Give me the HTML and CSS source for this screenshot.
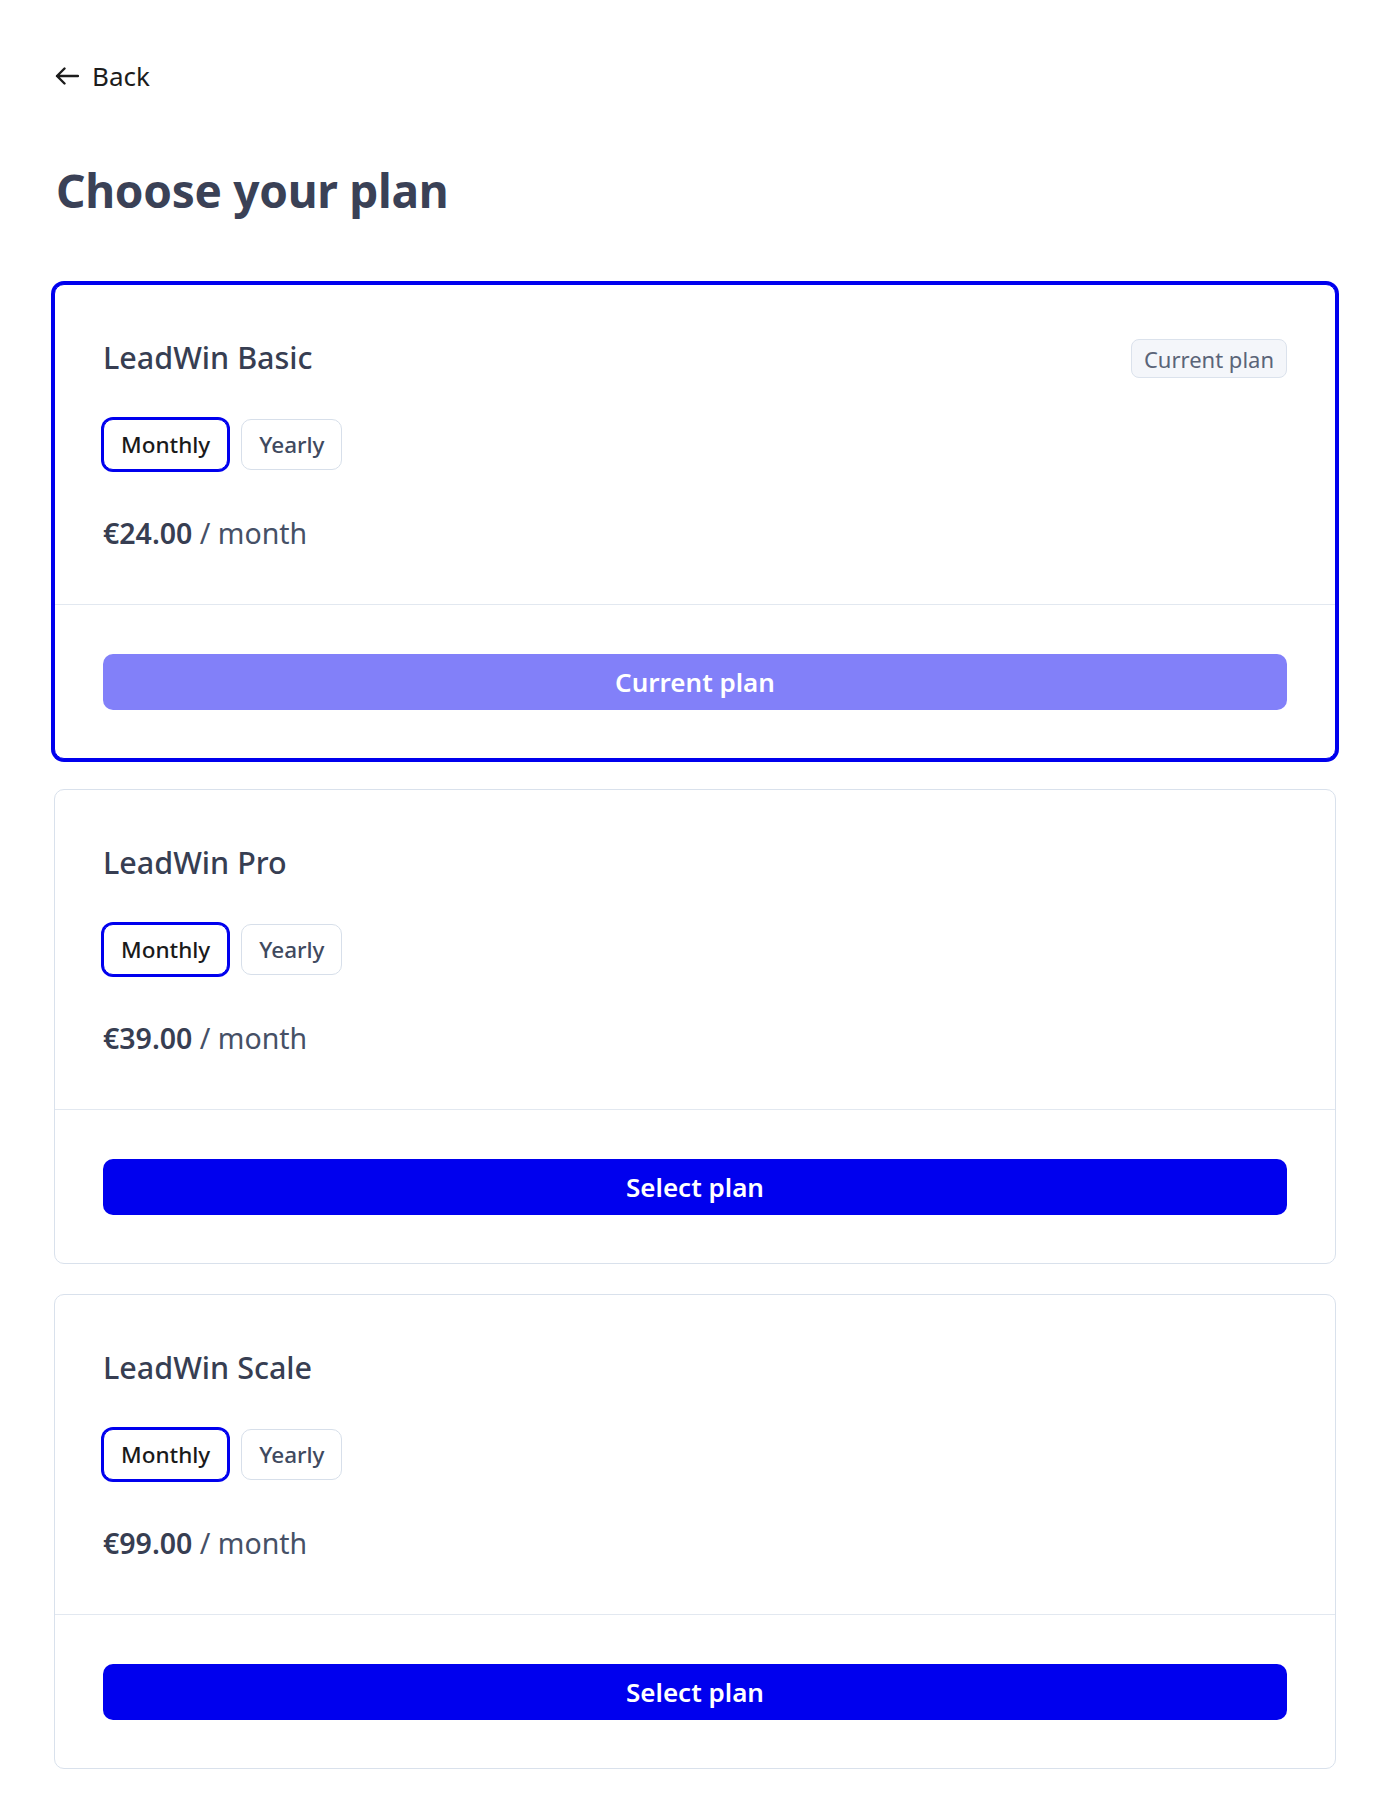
FILE: index.html
```html
<!DOCTYPE html>
<html lang="en">
<head>
<meta charset="utf-8">
<title>Choose your plan</title>
<link rel="stylesheet" href="styles.css">
</head>
<body>
<div class="page">
  <a class="back" href="#">
    <svg class="back-icon" width="24" height="18" viewBox="0 0 24 18" fill="none" stroke="currentColor" stroke-width="2.4" stroke-linecap="round" stroke-linejoin="round"><path d="M23 9H2M9.5 1.5L2 9l7.5 7.5"/></svg>
    <span>Back</span>
  </a>
  <h1 class="title">Choose your plan</h1>

  <div class="plans">
    <section class="card card-current">
      <div class="card-body">
        <div class="card-head">
          <h2 class="plan-name">LeadWin Basic</h2>
          <span class="badge">Current plan</span>
        </div>
        <div class="toggle">
          <button class="pill pill-active">Monthly</button>
          <button class="pill">Yearly</button>
        </div>
        <p class="price"><strong>€24.00</strong> / month</p>
      </div>
      <div class="card-foot">
        <button class="cta cta-disabled">Current plan</button>
      </div>
    </section>

    <section class="card">
      <div class="card-body">
        <div class="card-head">
          <h2 class="plan-name">LeadWin Pro</h2>
        </div>
        <div class="toggle">
          <button class="pill pill-active">Monthly</button>
          <button class="pill">Yearly</button>
        </div>
        <p class="price"><strong>€39.00</strong> / month</p>
      </div>
      <div class="card-foot">
        <button class="cta">Select plan</button>
      </div>
    </section>

    <section class="card">
      <div class="card-body">
        <div class="card-head">
          <h2 class="plan-name">LeadWin Scale</h2>
        </div>
        <div class="toggle">
          <button class="pill pill-active">Monthly</button>
          <button class="pill">Yearly</button>
        </div>
        <p class="price"><strong>€99.00</strong> / month</p>
      </div>
      <div class="card-foot">
        <button class="cta">Select plan</button>
      </div>
    </section>
  </div>
</div>
</body>
</html>
```

FILE: styles.css
```css
* { box-sizing: border-box; }

html, body {
  margin: 0;
  padding: 0;
  background: #ffffff;
}

body {
  font-family: "Noto Sans", "Open Sans", sans-serif;
  color: #3a4156;
}

.page {
  padding: 56px 46px 49px 54px;
}

.back {
  display: inline-flex;
  align-items: center;
  gap: 13px;
  color: #1c1c1c;
  text-decoration: none;
  font-size: 26px;
  line-height: 40px;
  margin-left: 1px;
}

.back-icon {
  display: block;
}

.title {
  margin: 62px 0 0 2px;
  font-size: 46px;
  line-height: 64px;
  font-weight: 700;
  color: #3a4156;
  letter-spacing: -0.3px;
}

.plans {
  display: flex;
  flex-direction: column;
  gap: 30px;
  margin-top: 62px;
}

.card {
  border: 1px solid #d9e1ec;
  border-radius: 10px;
  background: #fff;
}

.card-current {
  border-color: #0000ee;
  box-shadow: 0 0 0 3px #0000ee;
}

.card-body {
  padding: 48px;
  border-bottom: 1px solid #e2e8f0;
}

.card-head {
  display: flex;
  align-items: center;
  justify-content: space-between;
  height: 51px;
}

.plan-name {
  margin: -3px 0 0 0;
  font-size: 30.5px;
  font-weight: 500;
  color: #373e52;
  line-height: 40px;
}

.badge {
  display: inline-flex;
  align-items: center;
  height: 39px;
  padding: 0 12px;
  font-size: 22px;
  color: #5a6478;
  background: #f4f6fa;
  border: 1px solid #dbe2ec;
  border-radius: 8px;
}

.toggle {
  display: flex;
  gap: 13px;
  margin-top: 35px;
}

.pill {
  font-family: inherit;
  height: 51px;
  padding: 0 17px;
  font-size: 22.5px;
  font-weight: 500;
  color: #3f4a60;
  background: #fff;
  border: 1px solid #d7dfea;
  border-radius: 10px;
  cursor: pointer;
}

.pill-active {
  color: #1a1a1a;
  border-color: #0000ee;
  box-shadow: 0 0 0 2px #0000ee;
}

.price {
  margin: 41px 0 0 0;
  font-size: 28.5px;
  line-height: 45px;
  color: #465066;
}

.price strong {
  font-weight: 600;
  color: #373e52;
}

.card-foot {
  padding: 49px 48px 48px;
}

.cta {
  display: block;
  width: 100%;
  height: 56px;
  font-family: inherit;
  font-size: 26px;
  font-weight: 600;
  color: #ffffff;
  background: #0000ee;
  border: none;
  border-radius: 10px;
  cursor: pointer;
}

.cta-disabled {
  background: #8280f9;
  cursor: default;
}
```
